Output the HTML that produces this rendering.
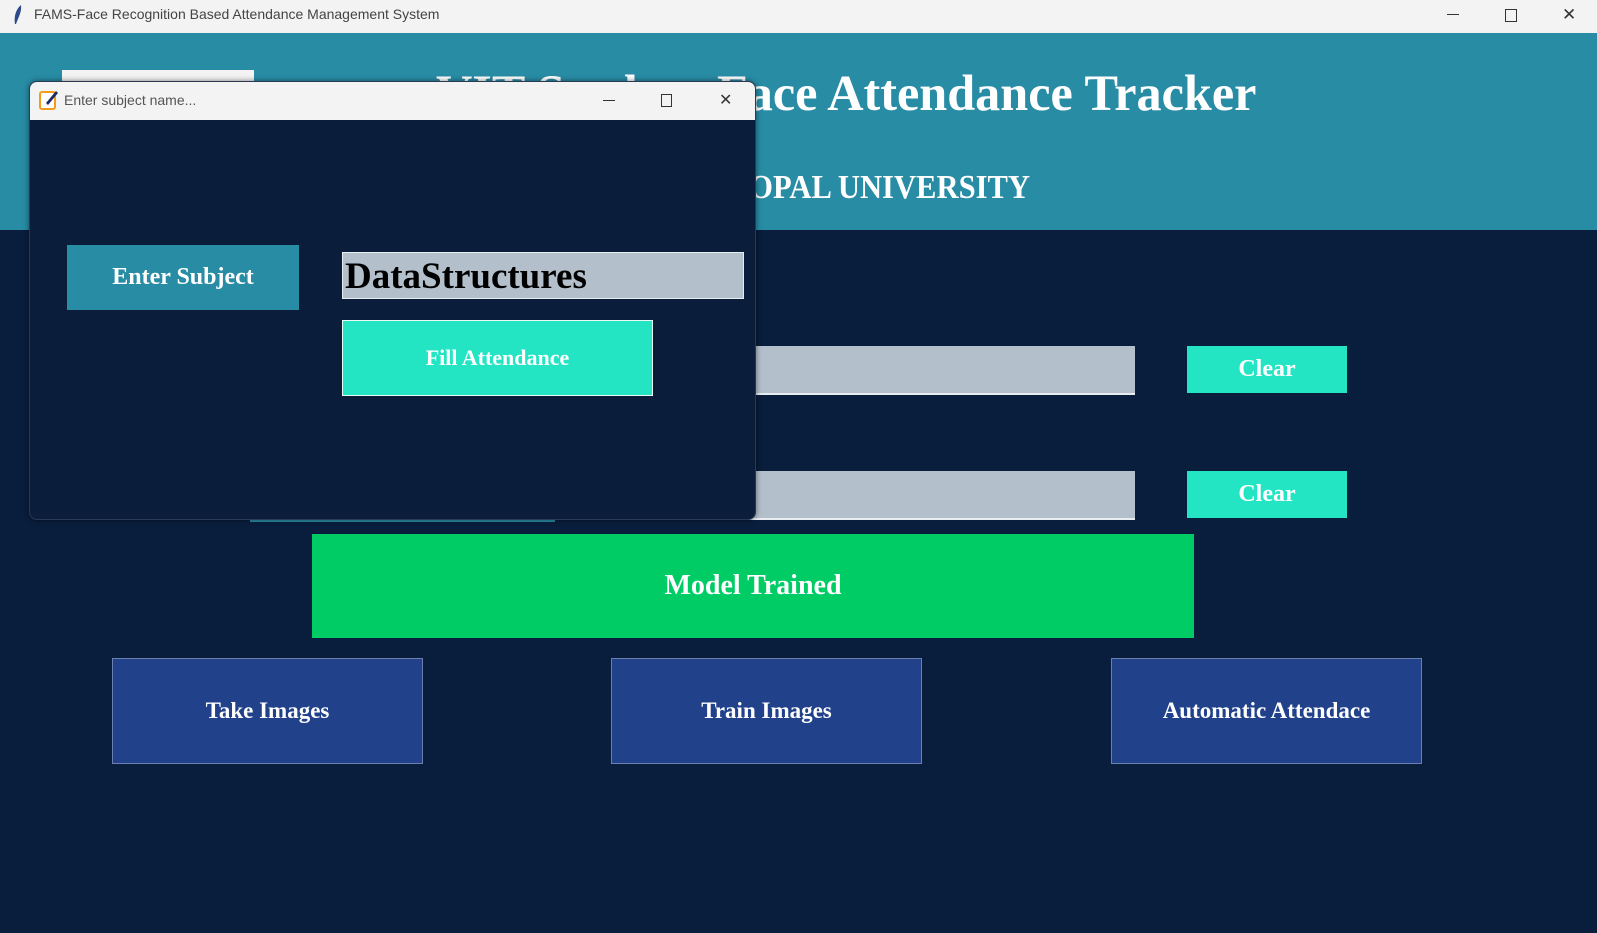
<!DOCTYPE html>
<html><head><meta charset="utf-8"><style>
body{margin:0;width:1597px;height:933px;overflow:hidden;background:#091d3c;font-family:"Liberation Serif",serif;position:relative}
.a{position:absolute}
.c{display:flex;align-items:center;justify-content:center;color:#fff;font-weight:bold}
.ui{font-family:"Liberation Sans",sans-serif}
</style></head><body>
<div class="a" style="left:0;top:0;width:1597px;height:33px;background:#f3f3f3"></div>
<svg class="a" style="left:11px;top:4px" width="14" height="22"><path d="M10 1 C4 6 3 14 4 20 L5 20 C7 14 11 8 10 1Z" fill="#2a4a8a"/></svg>
<div class="a ui" style="left:34px;top:6px;font-size:14px;color:#444">FAMS-Face Recognition Based Attendance Management System</div>
<div class="a" style="left:1447px;top:14px;width:12px;height:1px;background:#333"></div>
<div class="a" style="left:1505px;top:9px;width:10px;height:11px;border:1px solid #333"></div>
<div class="a ui" style="left:1562px;top:5px;font-size:17px;color:#333">&#x2715;</div>
<div class="a" style="left:0;top:33px;width:1597px;height:197px;background:#288ca5"></div>
<div class="a" style="left:62px;top:70px;width:192px;height:30px;background:#f3f3f3"></div>
<div class="a" style="left:436px;top:65px;font-size:51px;font-weight:bold;color:#fff;white-space:nowrap;transform:scaleX(0.985);transform-origin:left center">VIT Student Face Attendance Tracker</div>
<div class="a" style="left:600px;top:169px;width:430px;text-align:right;font-size:34px;font-weight:bold;color:#fff;white-space:nowrap;transform:scaleX(0.9);transform-origin:right center">VIT BHOPAL UNIVERSITY</div>
<div class="a" style="left:599px;top:346px;width:536px;height:47px;background:#b3bfcb;border-bottom:2px solid #e8edf2"></div>
<div class="a" style="left:599px;top:471px;width:536px;height:47px;background:#b3bfcb;border-bottom:2px solid #e8edf2"></div>
<div class="a c" style="left:1187px;top:346px;width:160px;height:47px;background:#23e5c4;font-size:24px">Clear</div>
<div class="a c" style="left:1187px;top:471px;width:160px;height:47px;background:#23e5c4;font-size:24px">Clear</div>
<div class="a" style="left:250px;top:512px;width:305px;height:10px;background:#288ca5"></div>
<div class="a c" style="left:312px;top:534px;width:882px;height:104px;background:#00cc66;font-size:28px">Model Trained</div>
<div class="a c" style="left:112px;top:658px;width:309px;height:104px;background:#21418a;border:1px solid #6a7fb0;font-size:23px">Take Images</div>
<div class="a c" style="left:611px;top:658px;width:309px;height:104px;background:#21418a;border:1px solid #6a7fb0;font-size:23px">Train Images</div>
<div class="a c" style="left:1111px;top:658px;width:309px;height:104px;background:#21418a;border:1px solid #6a7fb0;font-size:23px">Automatic Attendace</div>
<div class="a" style="left:29px;top:81px;width:725px;height:437px;background:#0a1e3c;border-radius:8px;overflow:hidden;box-shadow:0 0 6px rgba(0,0,0,.5);border:1px solid #2a3a55">
 <div class="a" style="left:0;top:0;width:725px;height:38px;background:#f3f3f3"></div>
 <svg class="a" style="left:8px;top:7px" width="22" height="22"><rect x="2" y="3" width="15" height="17" rx="2" fill="#fff" stroke="#f39b1a" stroke-width="2"/><path d="M8 14 L18 2 L20 4 L10 16Z" fill="#1b2a6b"/></svg>
 <div class="a ui" style="left:34px;top:10px;font-size:14px;color:#555">Enter subject name...</div>
 <div class="a" style="left:573px;top:18px;width:12px;height:1px;background:#333"></div>
 <div class="a" style="left:631px;top:12px;width:9px;height:11px;border:1px solid #333"></div>
 <div class="a ui" style="left:689px;top:8px;font-size:16px;color:#333">&#x2715;</div>
 <div class="a c" style="left:37px;top:163px;width:232px;height:65px;background:#288ca5;font-size:24px">Enter Subject</div>
 <div class="a" style="left:312px;top:170px;width:402px;height:47px;background:#b3bfcb;border:1px solid #e8edf2;font-size:37px;font-weight:bold;color:#000;line-height:47px;padding-left:2px;box-sizing:border-box">DataStructures</div>
 <div class="a c" style="left:312px;top:238px;width:311px;height:76px;background:#23e5c4;font-size:22px;border:1px solid #e8f8f5;box-sizing:border-box">Fill Attendance</div>
</div>
</body></html>
